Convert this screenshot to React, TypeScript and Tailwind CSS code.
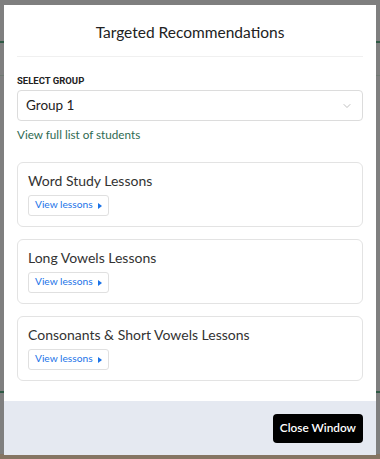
import { ChevronDown } from "lucide-react";

const lessons = ["Word Study Lessons", "Long Vowels Lessons", "Consonants & Short Vowels Lessons"];

function LessonCard({ title }: { title: string }) {
    return (
        <div className="rounded-[6px] border border-[#e3e3e3] bg-white px-[10px] pt-[8px] h-[65px]">
            <h4 className="text-[14px] leading-[20px] text-[#333]">{title}</h4>
            <button className="mt-[4px] flex items-center gap-[5px] h-[21px] px-[6px] rounded-[3px] border border-[#e0e0e0] text-[10.2px] text-[#1a73e8]">
                View lessons
                <svg width="4" height="6" viewBox="0 0 4 6" className="mt-[1px]">
                    <path d="M0 0 L4 3 L0 6 Z" fill="#1a73e8" />
                </svg>
            </button>
        </div>
    );
}

export default function App() {
    return (
        <div className="relative w-[380px] h-[459px] overflow-hidden bg-[#7f7f7f] font-['Lato','Open_Sans',sans-serif]">
            {/* page behind the overlay */}
            <div className="absolute left-0 right-0 top-[41px] h-[2px] bg-[#2f5a45]" />
            <div className="absolute left-0 right-0 top-[75px] h-px bg-[#6f7a72]" />
            <div className="absolute left-0 right-0 top-[391px] h-[2px] bg-[#2f5a45]" />
            <div className="absolute left-0 right-0 bottom-0 h-[5px] bg-[#857563]" />

            <div className="relative ml-[4px] mt-[5px] w-[372px] h-[450px] bg-white flex flex-col">
                {/* Header */}
                <div className="mx-[13px] h-[52px] flex items-center justify-center border-b border-[#f0f0f0]">
                    <h3 className="text-[15.5px] text-[#222] pt-[4px]">Targeted Recommendations</h3>
                </div>

                {/* Body */}
                <div className="px-[13px] pt-[17px] flex-1">
                    <label className="block text-[9.5px] leading-[14px] font-bold text-[#222] font-['Roboto',sans-serif]">SELECT GROUP</label>
                    <div className="mt-[2px] h-[31px] rounded-[4px] border border-[#dcdcdc] flex items-center justify-between pl-[8px] pr-[9px]">
                        <span className="text-[13.5px] text-[#222]">Group 1</span>
                        <ChevronDown size={12} className="text-[#aaa]" strokeWidth={1.5} />
                    </div>
                    <a className="block mt-[5px] text-[11.7px] text-[#2e6a52]">View full list of students</a>

                    <div className="mt-[18px] flex flex-col gap-[12px]">
                        {lessons.map(l => (
                            <LessonCard key={l} title={l} />
                        ))}
                    </div>
                </div>

                {/* Footer */}
                <div className="h-[54px] bg-[#e5e9f1] flex items-center justify-end px-[13px]">
                    <button className="h-[29px] px-[7px] rounded-[4px] bg-black text-white text-[11.8px] font-semibold">
                        Close Window
                    </button>
                </div>
            </div>
        </div>
    );
}
